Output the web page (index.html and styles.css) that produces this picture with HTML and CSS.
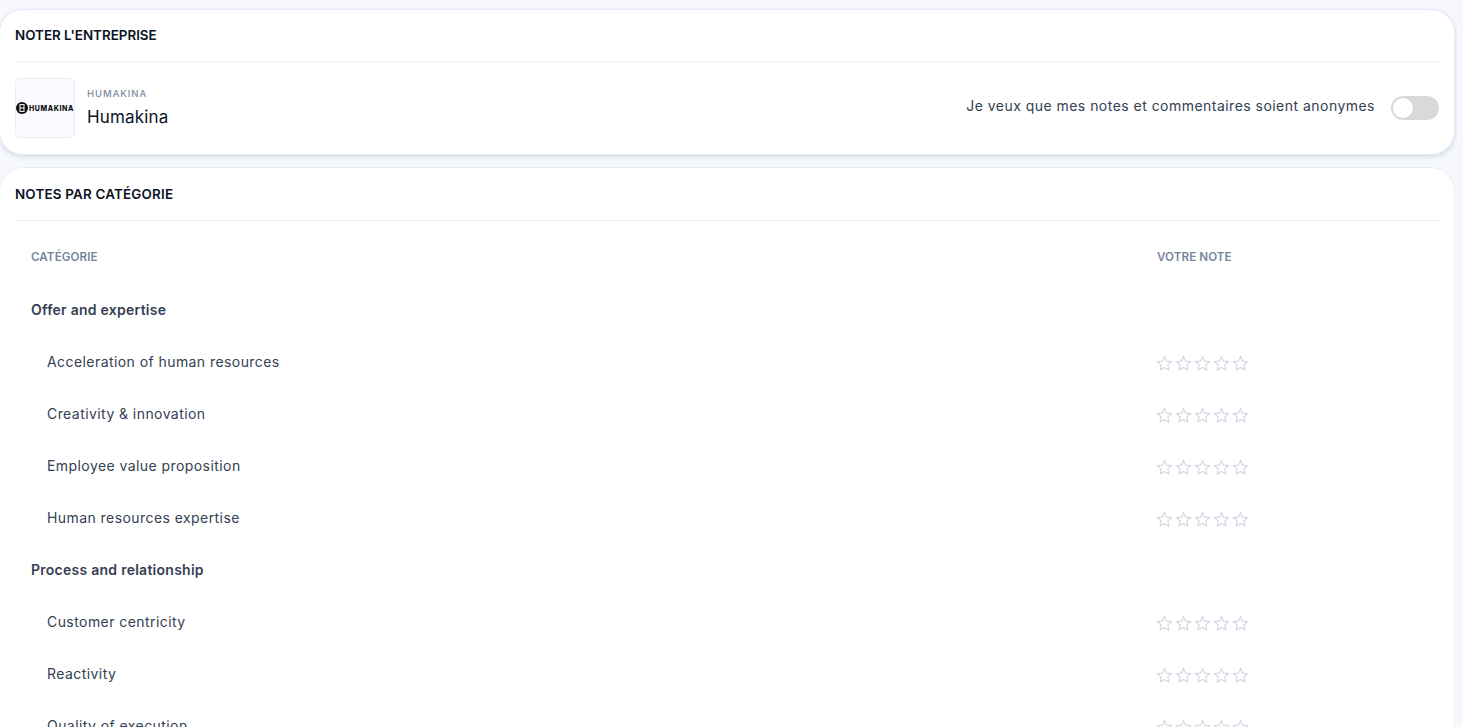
FILE: index.html
```html
<!DOCTYPE html>
<html lang="fr">
<head>
<meta charset="utf-8">
<title>Noter l'entreprise</title>
<link rel="stylesheet" href="styles.css">
</head>
<body>
<svg class="defs" aria-hidden="true"><symbol id="star" viewBox="0 0 17 17"><path d="M8.5 1.6l2.05 4.55 4.95.56-3.68 3.35 1.02 4.88L8.5 12.45l-4.34 2.49 1.02-4.88L1.5 6.71l4.95-.56z"/></symbol></svg>
<main class="page">
  <section class="card">
    <h2 class="card-title card-title-first">NOTER L'ENTREPRISE</h2>
    <div class="company">
      <div class="logo">
        <svg class="logo-mark" viewBox="0 0 12 12" aria-hidden="true"><circle cx="6" cy="6" r="6" fill="#111"/><path d="M3.6 2.6h4.8M3.6 9.4h4.8M4 2.6v6.8M8 2.6v6.8M4 6h4" stroke="#fff" stroke-width="1" fill="none"/></svg>
        <span class="logo-text">HUMAKINA</span>
      </div>
      <div class="company-info">
        <div class="company-label">HUMAKINA</div>
        <div class="company-name">Humakina</div>
      </div>
      <div class="anon">
        <span class="anon-text">Je veux que mes notes et commentaires soient anonymes</span>
        <span class="toggle"><span class="knob"></span></span>
      </div>
    </div>
  </section>
  <section class="card card-notes">
    <h2 class="card-title card-title-second">NOTES PAR CATÉGORIE</h2>
    <div class="table">
      <div class="row head"><span>CATÉGORIE</span><span>VOTRE NOTE</span></div>
      <div class="row group"><span>Offer and expertise</span></div>
      <div class="row item"><span>Acceleration of human resources</span><span class="stars"><svg class="star"><use href="#star"/></svg><svg class="star"><use href="#star"/></svg><svg class="star"><use href="#star"/></svg><svg class="star"><use href="#star"/></svg><svg class="star"><use href="#star"/></svg></span></div>
      <div class="row item"><span>Creativity &amp; innovation</span><span class="stars"><svg class="star"><use href="#star"/></svg><svg class="star"><use href="#star"/></svg><svg class="star"><use href="#star"/></svg><svg class="star"><use href="#star"/></svg><svg class="star"><use href="#star"/></svg></span></div>
      <div class="row item"><span>Employee value proposition</span><span class="stars"><svg class="star"><use href="#star"/></svg><svg class="star"><use href="#star"/></svg><svg class="star"><use href="#star"/></svg><svg class="star"><use href="#star"/></svg><svg class="star"><use href="#star"/></svg></span></div>
      <div class="row item"><span>Human resources expertise</span><span class="stars"><svg class="star"><use href="#star"/></svg><svg class="star"><use href="#star"/></svg><svg class="star"><use href="#star"/></svg><svg class="star"><use href="#star"/></svg><svg class="star"><use href="#star"/></svg></span></div>
      <div class="row group"><span>Process and relationship</span></div>
      <div class="row item"><span>Customer centricity</span><span class="stars"><svg class="star"><use href="#star"/></svg><svg class="star"><use href="#star"/></svg><svg class="star"><use href="#star"/></svg><svg class="star"><use href="#star"/></svg><svg class="star"><use href="#star"/></svg></span></div>
      <div class="row item"><span>Reactivity</span><span class="stars"><svg class="star"><use href="#star"/></svg><svg class="star"><use href="#star"/></svg><svg class="star"><use href="#star"/></svg><svg class="star"><use href="#star"/></svg><svg class="star"><use href="#star"/></svg></span></div>
      <div class="row item"><span>Quality of execution</span><span class="stars"><svg class="star"><use href="#star"/></svg><svg class="star"><use href="#star"/></svg><svg class="star"><use href="#star"/></svg><svg class="star"><use href="#star"/></svg><svg class="star"><use href="#star"/></svg></span></div>
    </div>
  </section>
</main>
</body>
</html>
```
FILE: styles.css
```css
* { box-sizing: border-box; }
html, body { margin: 0; height: 100%; overflow: hidden; }
body { background: #f6f8fd; font-family: Inter, "Noto Sans", sans-serif; color: #344054; }
.defs { display: none; }
.page { display: flex; flex-direction: column; gap: 12px; padding: 9px 8px 0 0; }
.card { background: #fff; border: 1px solid #e6eefa; border-radius: 24px; padding: 0 15px; box-shadow: 0 2px 5px rgba(100,116,139,.22); margin-left: -1px; }
.card-notes { box-shadow: none; }
.card-title { margin: 0; display: flex; align-items: center; font-size: 13.4px; font-weight: 600; color: #0b1324; border-bottom: 1px solid #e9f0f9; }
.card-title-first { height: 52px; padding-bottom: 2px; }
.card-title-second { height: 53px; letter-spacing: .2px; }
.company { display: flex; align-items: center; height: 92px; }
.logo { width: 60px; height: 60px; border: 1px solid #e6eefa; border-radius: 6px; background: #f8fafe; display: flex; align-items: center; gap: 1px; }
.logo-mark { width: 12px; height: 12px; flex: none; }
.logo-text { font-size: 7px; font-weight: 800; color: #111; letter-spacing: .6px; }
.company-info { margin-left: 12px; }
.company-label { font-size: 9.5px; font-weight: 500; letter-spacing: .95px; color: #7b8ba3; line-height: 14px; }
.company-name { font-size: 17px; letter-spacing: .15px; color: #0b1324; line-height: 24px; margin-top: 4px; }
.anon { margin-left: auto; display: flex; align-items: center; gap: 16px; margin-top: -2px; }
.anon-text { font-size: 14px; letter-spacing: .47px; color: #344054; margin-top: -4px; }
.toggle { width: 48px; height: 24px; border-radius: 12px; background: #d9d9d9; padding: 2px; display: block; margin-top: 2px; }
.knob { display: block; width: 20px; height: 20px; border-radius: 50%; background: #fff; }
.table { padding-top: 9px; }
.row { display: grid; grid-template-columns: 1126px 1fr; align-items: center; height: 52px; padding: 0 0 1px 16px; font-size: 14px; letter-spacing: .43px; }
.head { height: 54px; padding-bottom: 0; font-size: 11.6px; letter-spacing: .1px; font-weight: 600; color: #76859c; }
.group { font-weight: 600; letter-spacing: .26px; color: #344054; }
.item > span:first-child { padding-left: 16px; }
.stars { display: flex; gap: 2px; margin-left: -1px; margin-top: 3px; }
.star { width: 17px; height: 17px; fill: none; stroke: #d3d5e2; stroke-width: 1.1; }
```
